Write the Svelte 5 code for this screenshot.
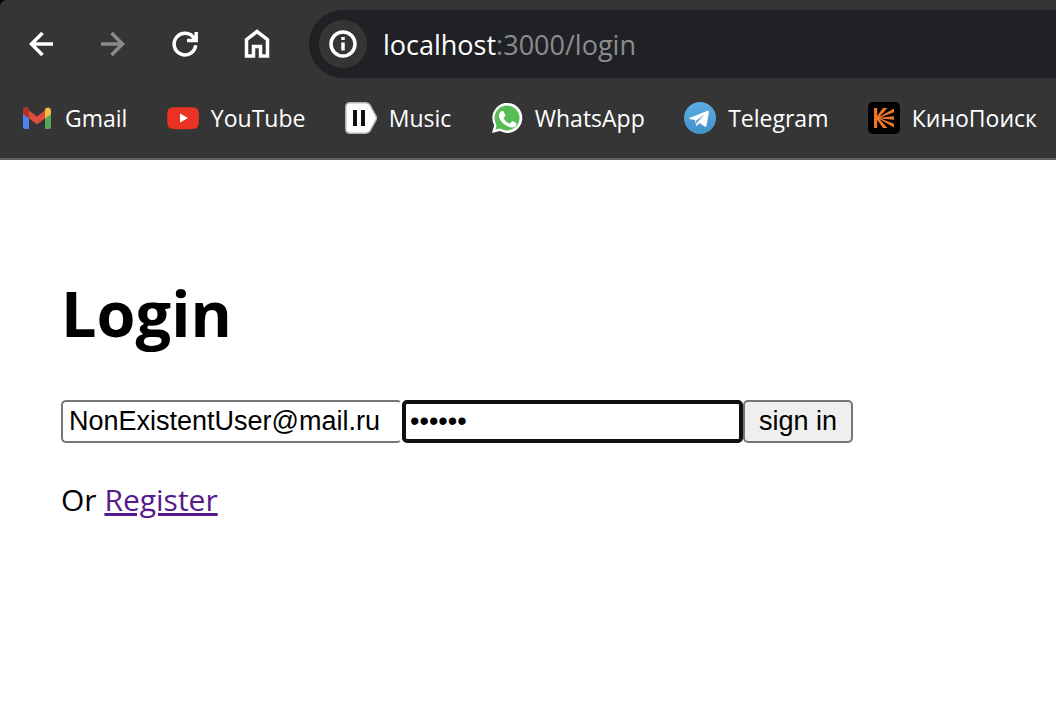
<script>
  let address = $state('NonExistentUser@mail.ru');
  let password = $state('secret');
</script>

<div class="browser">
  <header>
    <nav class="toolbar" aria-label="Navigation">
      <button class="tool" aria-label="Back">
        <svg viewBox="0 0 32 32"><path d="M28 16H6.500M17.500 5 6.500 16l11 11" /></svg>
      </button>
      <button class="tool" aria-label="Forward" disabled>
        <svg viewBox="0 0 32 32"><path d="M4 16h21.500M14.500 5l11 11-11 11" /></svg>
      </button>
      <button class="tool" aria-label="Reload">
        <svg viewBox="0 0 32 32"><path d="M26.700 17.200A10.800 10.800 0 1 1 25.300 10.600L26.500 12.500M18 12.500h9.200V4" /></svg>
      </button>
      <button class="tool" aria-label="Home">
        <svg viewBox="0 0 32 32"><path d="M5.500 28V11.500L16 3.500l10.500 8V28H19.500v-9.500h-7V28z" /></svg>
      </button>
      <div class="address">
        <button class="info" aria-label="Site information">
          <svg viewBox="0 0 32 32">
            <circle cx="16" cy="16" r="12" />
            <path d="M16 14.500v8M16 9v3" />
          </svg>
        </button>
        <span class="url"><b>localhost</b>:3000/login</span>
      </div>
    </nav>
    <nav class="bookmarks" aria-label="Bookmarks">
      <a href="#gmail">
        <svg viewBox="0 0 32 32">
          <path fill="#5084ec" d="M2 11l6 4.500V27H4q-2 0-2-2z" />
          <path fill="#56a65a" d="M24 15.500 30 11v14q0 2-2 2h-4z" />
          <path fill="#dc4c3c" d="M7.500 8 16 14.500 24.500 8v8L16 22.500 7.500 16z" />
          <path fill="#b5342a" d="M2 12V8.500C2 5 5.500 4 8 6.500v10z" />
          <path fill="#f2bd42" d="M24 7c3-3 6-1.500 6 2v3l-6 4.500z" />
        </svg>
        <span>Gmail</span>
      </a>
      <a href="#youtube">
        <svg viewBox="0 0 32 32">
          <path fill="#ea3323" d="M5 5.500Q16 4.500 27 5.500q4 .5 4.500 4 .8 6.500 0 13-.5 4-4.500 4.300-11 1-22 0-4-.3-4.500-4.300-.8-6.500 0-13Q1 6 5 5.500z" />
          <path fill="#fff" d="M13 11.500v9l8-4.500z" />
        </svg>
        <span>YouTube</span>
      </a>
      <a href="#music">
        <svg viewBox="0 0 32 32">
          <path fill="#fff" stroke="#b4b4b4" stroke-width="1.500" d="M5 .8h16q2.500 0 4 2.400L31 14q1 2 0 4l-6 10.800q-1.500 2.400-4 2.400H5Q.8 31.200.8 27V5Q.8.8 5 .8z" />
          <path fill="#111" d="M8 8h4v16H8zM16 8h4v16h-4z" />
        </svg>
        <span>Music</span>
      </a>
      <a href="#whatsapp">
        <svg viewBox="0 0 32 32">
          <path fill="#fff" d="M1 31l2.200-7.800A15 15 0 1 1 9 29z" />
          <circle cx="16" cy="16" r="12.500" fill="#58bd55" />
          <path fill="#58bd55" d="M4.500 27.500 6 21l5 5z" />
          <path fill="#fff" d="M10.300 9h1.400q.8 0 1.100.8l1.400 3.300q.2.600-.2 1.100l-1.300 1.500q-.4.500 0 1 2 3.400 5.500 4.800.6.200 1-.2l1.600-1.900q.4-.5 1-.2l3.100 1.500q.7.400.6 1.100-.2 3-3.600 3.700-2.500.4-6.800-1.900-4.400-2.800-6.300-6.400-2.500-5 1.500-8.200z" />
        </svg>
        <span>WhatsApp</span>
      </a>
      <a href="#telegram">
        <svg viewBox="0 0 32 32">
          <defs>
            <linearGradient id="sky" x2="0" y2="1">
              <stop stop-color="#5cade3" />
              <stop offset="1" stop-color="#4491c9" />
            </linearGradient>
          </defs>
          <circle cx="16" cy="16" r="16" fill="url(#sky)" />
          <path fill="#fff" d="M5.500 16 23.500 8.800q1.700-.5 1.400 1.500l-2.400 13.400q-.4 1.600-1.900.7l-5-3.400-2.500 2.400q-.8.700-1-.4L11 18 5.700 17q-1.300-.4-.2-1z" />
          <path fill="#4c9bd2" d="M12 18.800 20.500 12.500l-6.300 6.700-1.500 3z" />
        </svg>
        <span>Telegram</span>
      </a>
      <a href="#kinopoisk">
        <svg viewBox="0 0 32 32">
          <rect width="32" height="32" rx="5" />
          <path fill="#f07427" d="M6 6h3.200v8L15 6h4.500l-8.300 9L26 6.500v3.800l-13.500 5.200L26 14.300v3.400l-13.500-1.200L26 21.700v3.800L11.200 17l8.300 9H15l-5.800-8v8H6z" />
        </svg>
        <span>КиноПоиск</span>
      </a>
    </nav>
  </header>

  <main>
    <h1>Login</h1>
    <form onsubmit={(event) => event.preventDefault()}>
      <input class="email" type="text" aria-label="Email" bind:value={address} />
      <input class="password" type="password" aria-label="Password" bind:value={password} />
      <button type="submit">sign in</button>
    </form>
    <p>Or <a href="#register">Register</a></p>
  </main>
</div>

<style>
  :global(body) {
    margin: 0;
    background: #fff;
  }

  .browser {
    background: #000;
    font-family: 'Segoe UI', 'Open Sans', 'Noto Sans', sans-serif;
    color: #000;
  }

  header {
    background: #353535;
    border-bottom: 2px solid #5f5f5f;
    border-top-left-radius: 6px;
    color: #fff;
    overflow: hidden;
  }

  svg {
    display: block;
    flex: none;
    width: 32px;
    height: 32px;
  }

  .toolbar {
    display: flex;
    align-items: center;
    gap: 40px;
    padding: 10px 0 0 25px;
  }

  .tool,
  .info {
    flex: none;
    padding: 0;
    border: 0;
    background: none;
    color: #fff;
  }

  .tool:disabled {
    color: #8a8a8a;
  }

  .toolbar svg {
    fill: none;
    stroke: currentColor;
    stroke-width: 3.500;
  }

  .address {
    flex: 1;
    display: flex;
    align-items: center;
    gap: 16px;
    height: 68px;
    margin-left: -4px;
    padding-left: 10px;
    border-radius: 34px 0 0 34px;
    background: #202124;
    font-size: 27px;
  }

  .info {
    display: grid;
    place-items: center;
    width: 48px;
    height: 48px;
    border-radius: 50%;
    background: #353535;
  }

  .url {
    color: #8b8c8e;
  }

  .url b {
    color: #fff;
    font-weight: 400;
  }

  .bookmarks {
    display: flex;
    justify-content: space-between;
    padding: 20px 19px 20px 21px;
  }

  .bookmarks a {
    display: flex;
    align-items: center;
    gap: 12px;
    color: #fff;
    font-size: 23px;
    line-height: 40px;
    text-decoration: none;
  }

  main {
    padding: 110px 61px;
    background: #fff;
  }

  h1 {
    margin: 0 0 44px;
    font-size: 63px;
    line-height: 86px;
  }

  form {
    display: flex;
    margin-bottom: 36px;
  }

  input,
  form button {
    box-sizing: border-box;
    height: 43px;
    margin: 0;
    border: 2px solid #767676;
    border-radius: 5px;
    font-family: 'Liberation Sans', Arial, sans-serif;
    font-size: 27px;
    color: #000;
  }

  input {
    flex: 0 1 341px;
    min-width: 0;
    padding: 0 6px;
    background: #fff;
    outline: none;
  }

  .email {
    border-right-color: #fff;
  }

  .password {
    padding: 0 4px;
    border: 4px solid #101010;
  }

  form button {
    padding: 0 14px;
    background: #efefef;
  }

  p {
    margin: 0;
    font-size: 30px;
    line-height: 42px;
  }

  p a {
    color: #551a8b;
    text-decoration-thickness: 3px;
  }
</style>
